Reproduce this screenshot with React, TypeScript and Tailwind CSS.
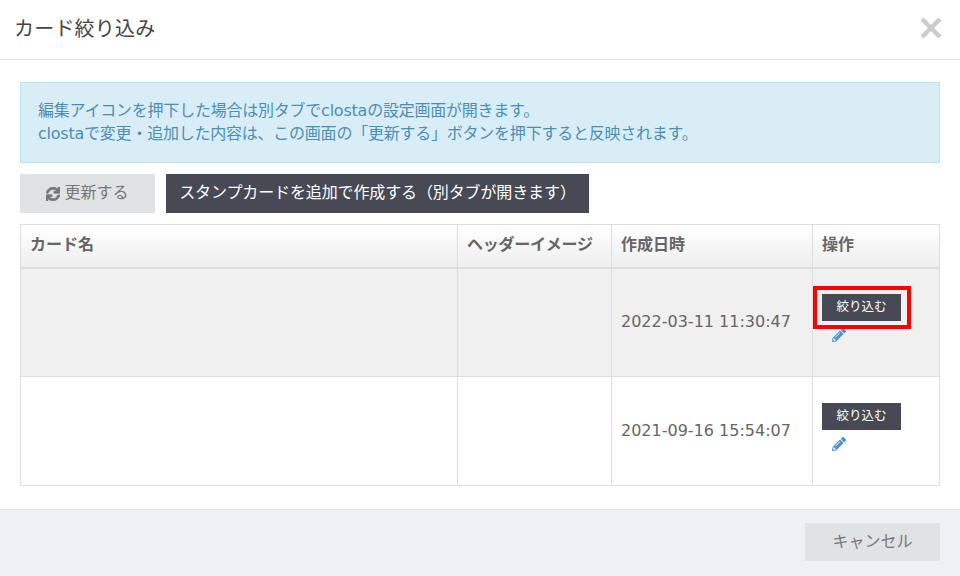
import { FaPencilAlt, FaSync } from "react-icons/fa";

const rows = [
  { date: "2022-03-11 11:30:47", active: true },
  { date: "2021-09-16 15:54:07", active: false },
];

export default function App() {
  return (
    <div className="w-[960px] h-[576px] bg-white flex flex-col overflow-hidden text-[#666] font-['Verdana','DejaVu_Sans','Noto_Sans_CJK_JP',sans-serif]">
      {/* ヘッダー */}
      <div className="h-[60px] shrink-0 flex items-center justify-between border-b border-[#e5e5e5] pl-[14px] pr-[17px]">
        <h1 className="text-[20px] text-[#444] font-normal tracking-[0.2px] mt-[-2px]">カード絞り込み</h1>
        <svg width="24" height="24" viewBox="0 0 24 24" className="text-[#ccc] mt-[-3px]">
          <path d="M3 3 L21 21 M21 3 L3 21" stroke="currentColor" strokeWidth="4.5" fill="none" />
        </svg>
      </div>

      <div className="flex-1 px-5 pt-[22px]">
        <div className="h-[81px] border border-[#b5e5ee] bg-[#d9edf7] text-[#4a8fb3] text-[16px] leading-[23px] tracking-[-0.23px] px-[17px] pb-[2px] flex flex-col justify-center">
          <p>編集アイコンを押下した場合は別タブでclostaの設定画面が開きます。</p>
          <p>clostaで変更・追加した内容は、この画面の「更新する」ボタンを押下すると反映されます。</p>
        </div>

        <div className="flex gap-[11px] mt-[11px]">
          <button className="w-[135px] h-[39px] bg-[#dfe3e3] text-[#777] text-[16px] flex items-center justify-center gap-[4px] pb-[2px]">
            <FaSync className="w-[14px] h-[14px] mt-[2px]" stroke="currentColor" strokeWidth={30} />
            更新する
          </button>
          <button className="w-[423px] h-[39px] bg-[#474a54] text-white text-[16px] tracking-[-0.12px] flex items-center justify-center pb-[2px]">
            スタンプカードを追加で作成する（別タブが開きます）
          </button>
        </div>

        <table className="w-[919px] mt-[11px] table-fixed border-collapse border border-[#ddd] text-[16px]">
          <colgroup>
            <col className="w-[437px]" />
            <col className="w-[154px]" />
            <col className="w-[201px]" />
            <col className="w-[127px]" />
          </colgroup>
          <thead>
            <tr className="h-[43px] bg-gradient-to-b from-white to-[#eeeeee]">
              <th className="border border-[#ddd] border-b-2 px-[9px] text-left text-[16px] font-bold pb-[2px]">カード名</th>
              <th className="border border-[#ddd] border-b-2 px-[9px] text-left text-[16px] tracking-[-0.25px] font-bold pb-[2px]">ヘッダーイメージ</th>
              <th className="border border-[#ddd] border-b-2 px-[9px] text-left text-[16px] font-bold pb-[2px]">作成日時</th>
              <th className="border border-[#ddd] border-b-2 px-[9px] text-left text-[16px] font-bold pb-[2px]">操作</th>
            </tr>
          </thead>
          <tbody>
            {rows.map((r) => (
              <tr key={r.date} className={r.active ? "h-[109px] bg-[#f0f0f0]" : "h-[109px] bg-white"}>
                <td className="border border-[#ddd]"></td>
                <td className="border border-[#ddd]"></td>
                <td className="border border-[#ddd] px-[9px] text-[16px] pb-[1px]">{r.date}</td>
                <td className="border border-[#ddd] px-[9px]">
                  <div className="relative w-[79px] pb-[8px]">
                    <button className="w-[79px] h-[27px] bg-[#474a54] text-white text-[12.5px] flex items-center justify-center">
                      絞り込む
                    </button>
                    <FaPencilAlt className="w-[14px] h-[14px] mt-[7px] ml-[10px] text-[#4a90d2]" />
                    {r.active && (
                      <div className="absolute left-[-9px] top-[-8px] w-[98px] h-[43px] border-[4px] border-[#ff0000]"></div>
                    )}
                  </div>
                </td>
              </tr>
            ))}
          </tbody>
        </table>
      </div>

      {/* フッター */}
      <div className="h-[67px] shrink-0 bg-[#edf1f6] border-t border-[#e5e5e5] flex justify-end items-start pt-[13px] pr-5">
        <button className="w-[135px] h-[38px] bg-[#dfe3e3] text-[#777] text-[16px] flex items-center justify-center">
          キャンセル
        </button>
      </div>
    </div>
  );
}
